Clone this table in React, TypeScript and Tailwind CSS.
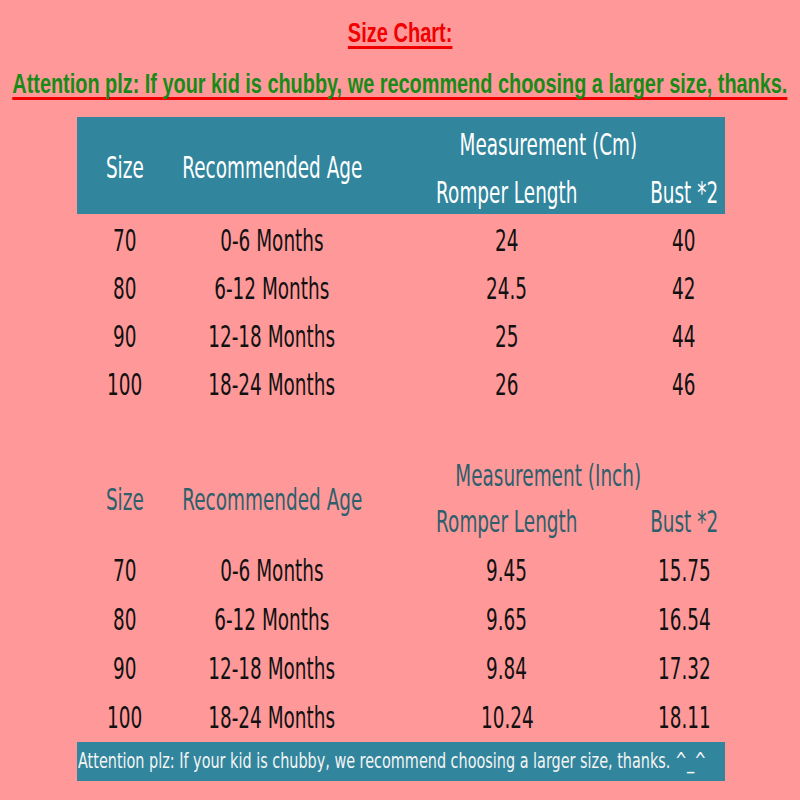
import React from 'react';

const cols = 'grid grid-cols-[96px_198px_272px_82px]';

const cmRows = [
  ['70', '0-6 Months', '24', '40'],
  ['80', '6-12 Months', '24.5', '42'],
  ['90', '12-18 Months', '25', '44'],
  ['100', '18-24 Months', '26', '46'],
];

const inchRows = [
  ['70', '0-6 Months', '9.45', '15.75'],
  ['80', '6-12 Months', '9.65', '16.54'],
  ['90', '12-18 Months', '9.84', '17.32'],
  ['100', '18-24 Months', '10.24', '18.11'],
];

// the source font is very narrow, so squeeze DejaVu horizontally
const Narrow: React.FC<{ children: React.ReactNode }> = ({ children }) => (
  <span className="inline-block whitespace-nowrap scale-x-[0.595]">{children}</span>
);

const Cell: React.FC<{ children: React.ReactNode; className?: string }> = ({ children, className = '' }) => (
  <div className={`flex items-center justify-center ${className}`}>
    <Narrow>{children}</Narrow>
  </div>
);

const Header: React.FC<{ unit: string; className: string; rows: string }> = ({ unit, className, rows }) => (
  <div className={`${cols} ${rows} ${className}`}>
    <Cell className="row-span-2 pt-[4px]">Size</Cell>
    <Cell className="row-span-2 pt-[4px]">Recommended Age</Cell>
    <Cell className="col-span-2">Measurement ({unit})</Cell>
    <Cell>Romper Length</Cell>
    <Cell>Bust *2</Cell>
  </div>
);

const Rows: React.FC<{ data: string[][]; rowClass: string }> = ({ data, rowClass }) => (
  <div className="text-[#111]">
    {data.map((r) => (
      <div key={r[0]} className={`${cols} ${rowClass}`}>
        {r.map((v, i) => (
          <Cell key={i}>{v}</Cell>
        ))}
      </div>
    ))}
  </div>
);

export default function App() {
  return (
    <div className="w-[800px] h-[800px] overflow-hidden bg-[#FF9999] flex flex-col">
      <div className="flex flex-col items-center pt-[19px] font-['Liberation_Sans',Arial,sans-serif] font-bold text-[28px] leading-none">
        <span className="inline-block whitespace-nowrap scale-x-[0.715] text-[#F00000] underline decoration-[3px] underline-offset-[4px] decoration-[#F00000] [text-decoration-skip-ink:none]">
          Size Chart:
        </span>
        <span className="mt-[23px] inline-block whitespace-nowrap scale-x-[0.71] text-[#188A18] underline decoration-[3px] underline-offset-[4px] decoration-[#F00000] [text-decoration-skip-ink:none]">
          Attention plz: If your kid is chubby, we recommend choosing a larger size, thanks.
        </span>
      </div>

      <div className="ml-[77px] w-[648px] mt-[19px] font-['DejaVu_Sans',Verdana,sans-serif] text-[31px] leading-none">
        <Header unit="Cm" rows="grid-rows-[54px_43px]" className="bg-[#31859C] text-white" />
        <div className="mt-[2px]">
          <Rows data={cmRows} rowClass="h-12" />
        </div>

        <Header unit="Inch" rows="grid-rows-[48px_44px]" className="mt-[43px] text-[#2D5F6C]" />
        <div className="mt-[3px]">
          <Rows data={inchRows} rowClass="h-[49px]" />
        </div>

        <div className="h-[39px] bg-[#31859C] flex items-center pl-[1px] text-[21px] text-[#F4F4F4]">
          <span className="inline-block whitespace-nowrap origin-left scale-x-[0.686]">
            Attention plz: If your kid is chubby, we recommend choosing a larger size, thanks. ^_^
          </span>
        </div>
      </div>
    </div>
  );
}
